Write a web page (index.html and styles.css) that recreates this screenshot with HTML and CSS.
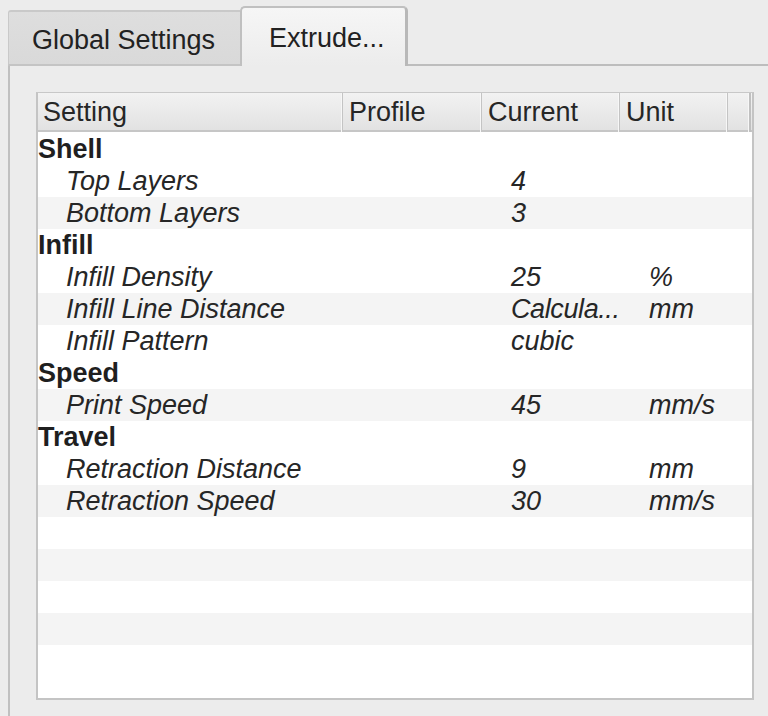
FILE: index.html
```html
<!DOCTYPE html>
<html>
<head>
<meta charset="utf-8">
<link rel="stylesheet" href="styles.css">
</head>
<body>
<div class="tabs">
  <div class="tab">Global Settings</div>
  <div class="tab active">Extrude...</div>
  <div class="tab-fill"></div>
</div>
<div class="pane">
  <div class="table">
    <div class="header">
      <div class="hcell">Setting</div>
      <div class="hcell">Profile</div>
      <div class="hcell">Current</div>
      <div class="hcell">Unit</div>
      <div class="hcell last"></div>
    </div>
    <div class="body">
      <div class="row group"><div class="c name">Shell</div></div>
      <div class="row"><div class="c name">Top Layers</div><div class="c"></div><div class="c val">4</div><div class="c val"></div></div>
      <div class="row alt"><div class="c name">Bottom Layers</div><div class="c"></div><div class="c val">3</div><div class="c val"></div></div>
      <div class="row group"><div class="c name">Infill</div></div>
      <div class="row"><div class="c name">Infill Density</div><div class="c"></div><div class="c val">25</div><div class="c val">%</div></div>
      <div class="row alt"><div class="c name">Infill Line Distance</div><div class="c"></div><div class="c val narrow">Calcula...</div><div class="c val">mm</div></div>
      <div class="row"><div class="c name">Infill Pattern</div><div class="c"></div><div class="c val">cubic</div><div class="c val"></div></div>
      <div class="row group"><div class="c name">Speed</div></div>
      <div class="row alt"><div class="c name">Print Speed</div><div class="c"></div><div class="c val">45</div><div class="c val">mm/s</div></div>
      <div class="row group"><div class="c name">Travel</div></div>
      <div class="row"><div class="c name">Retraction Distance</div><div class="c"></div><div class="c val">9</div><div class="c val">mm</div></div>
      <div class="row alt"><div class="c name">Retraction Speed</div><div class="c"></div><div class="c val">30</div><div class="c val">mm/s</div></div>
      <div class="row empty"></div>
      <div class="row empty alt"></div>
      <div class="row empty"></div>
      <div class="row empty alt"></div>
    </div>
  </div>
</div>
</body>
</html>
```

FILE: styles.css
```css
html, body {
  margin: 0;
  padding: 0;
  background: #ececec;
  font-family: "Liberation Sans", Arial, sans-serif;
  color: #262626;
  width: 768px;
  height: 716px;
  overflow: hidden;
}

.tabs {
  display: flex;
  align-items: flex-end;
  padding-left: 8px;
  padding-top: 6px;
  height: 60px;
}

.tab {
  box-sizing: border-box;
  height: 56px;
  width: 232px;
  padding-left: 23px;
  font-size: 27px;
  line-height: 56px;
  background: linear-gradient(#dedede, #d9d9d9);
  border-top: 2px solid #c9c9c9;
  border-left: 1px solid #c9c9c9;
  border-bottom: 2px solid #c4c4c4;
  border-top-left-radius: 3px;
  color: #222;
  white-space: nowrap;
}

.tab.active {
  height: 60px;
  width: 168px;
  padding-left: 27px;
  line-height: 60px;
  background: linear-gradient(#f6f6f6, #ececec);
  border: 2px solid #c0c0c0;
  border-right: 3px solid #b8b8b8;
  border-bottom: none;
  border-radius: 5px 5px 0 0;
}

.tab-fill {
  flex: 1;
  height: 0;
  border-bottom: 2px solid #bdbdbd;
}

.pane {
  margin-left: 8px;
  border-left: 2px solid #c0c0c0;
  padding: 26px 0 0 26px;
  height: 650px;
  box-sizing: border-box;
}

.table {
  width: 718px;
  height: 608px;
  box-sizing: border-box;
  border: 1px solid #c8c8c8;
  border-left: 2px solid #c4c4c4;
  border-bottom: 2px solid #c4c4c4;
  border-right: 2px solid #c4c4c4;
  background: #ffffff;
  display: flex;
  flex-direction: column;
}

.header {
  display: grid;
  grid-template-columns: 305px 139px 138px 108px 1fr;
  height: 39px;
  background: linear-gradient(#f2f2f2, #e2e2e2);
  border-bottom: 2px solid #c6c6c6;
  box-sizing: border-box;
}

.hcell {
  font-size: 27px;
  line-height: 39px;
  padding-left: 5px;
  border-right: 1px solid #c4c4c4;
  box-shadow: inset -1px 0 0 #f7f7f7;
  color: #262626;
  white-space: nowrap;
}

.hcell + .hcell {
  padding-left: 6px;
}

.hcell.last {
  border-right: 2px solid #c0c0c0;
  margin-right: 1px;
}

.body {
  display: flex;
  flex-direction: column;
  padding-top: 1px;
}

.row {
  display: grid;
  grid-template-columns: 305px 139px 138px 108px 1fr;
  height: 32px;
  font-size: 27px;
  line-height: 33px;
  font-style: italic;
  color: #262626;
}

.row.alt {
  background: #f4f4f4;
}

.row.group {
  font-style: normal;
  font-weight: bold;
  color: #1f1f1f;
}

.row.group .name {
  padding-left: 0;
  grid-column: 1 / -1;
}

.c {
  white-space: nowrap;
}

.name {
  padding-left: 28px;
}

.val {
  padding-left: 29px;
}

.val.narrow {
  letter-spacing: -0.4px;
}
```
